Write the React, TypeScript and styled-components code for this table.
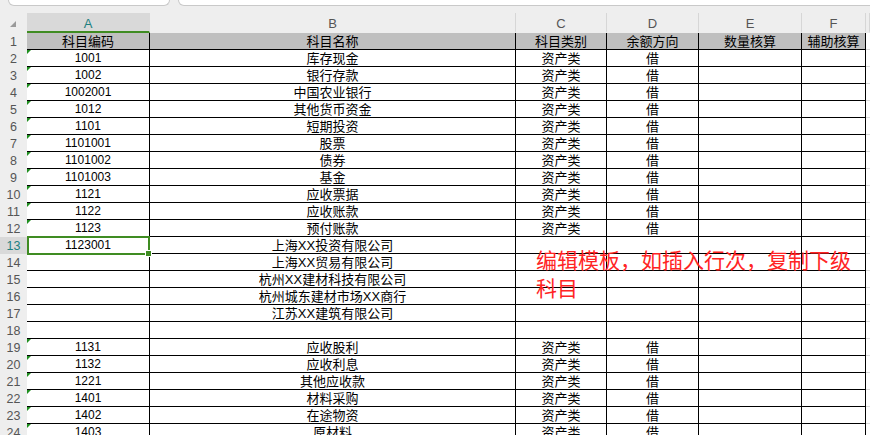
import React from "react";
import styled, { createGlobalStyle } from "styled-components";

const Global = createGlobalStyle`
  html, body { margin: 0; padding: 0; background: #eeeeee; overflow: hidden; }
  body { font-family: "Liberation Sans", "Noto Sans CJK SC", sans-serif; }
`;

const COLS = "27px 123px 366px 91px 92px 103px 64px 1fr";

const Page = styled.div`
  position: relative;
  width: 870px;
  height: 435px;
  overflow: hidden;
  background: #eeeeee;
`;

const TopBar = styled.div`
  height: 13px;
  display: flex;
  gap: 8px;
  padding-left: 8px;
  box-sizing: border-box;
`;

const Field = styled.div<{ $w?: string }>`
  width: ${(p) => p.$w || "auto"};
  flex: ${(p) => (p.$w ? "none" : "1")};
  height: 6px;
  background: #fff;
  border: 1px solid #c9c9c9;
  border-top: none;
  border-radius: 0 0 6px 6px;
  box-sizing: border-box;
  margin-right: ${(p) => (p.$w ? "0" : "-10px")};
`;

const Row = styled.div<{ $h?: number }>`
  display: grid;
  grid-template-columns: ${COLS};
  height: ${(p) => p.$h || 17}px;
`;

const Corner = styled.div`
  position: relative;
  background: #eeeeee;
  display: flex;
  align-items: flex-start;
  padding: 8px 0 0 10px;
  box-sizing: border-box;
`;

const ColHead = styled.div<{ $active?: boolean }>`
  background: ${(p) => (p.$active ? "#d9d9d9" : "#eeeeee")};
  color: ${(p) => (p.$active ? "#1c8080" : "#555")};
  border-right: 1px solid ${(p) => (p.$active ? "#d9d9d9" : "#d6d6d6")};
  border-bottom: 2px solid ${(p) => (p.$active ? "#3f8c22" : "transparent")};
  box-sizing: border-box;
  font-size: 13px;
  display: flex;
  align-items: center;
  justify-content: center;
  padding-top: 2px;
`;

const RowHead = styled.div<{ $active?: boolean }>`
  background: ${(p) => (p.$active ? "#d9d9d9" : "#eeeeee")};
  color: ${(p) => (p.$active ? "#1c8080" : "#555")};
  font-size: 12.5px;
  display: flex;
  align-items: center;
  justify-content: center;
`;

const Cell = styled.div<{ $head?: boolean; $cjk?: boolean }>`
  position: relative;
  background: ${(p) => (p.$head ? "#bfbfbf" : "#fff")};
  border-right: 1px solid #000;
  border-bottom: 1px solid #000;
  box-sizing: border-box;
  font-size: ${(p) => (p.$cjk ? "13px" : "12px")};
  color: #000;
  display: flex;
  align-items: center;
  justify-content: center;
  white-space: nowrap;
  overflow: visible;
  line-height: 1;
`;

const Blank = styled.div`
  background: #fff;
  border-bottom: 1px solid #dadada;
  box-sizing: border-box;
`;

const Flag = styled.span`
  position: absolute;
  left: 0;
  top: 0;
  width: 0;
  height: 0;
  border-top: 4px solid #1f8f1f;
  border-right: 4px solid transparent;
`;

const Selection = styled.span`
  position: absolute;
  z-index: 3;
  left: 0;
  top: -1px;
  right: -1px;
  bottom: -2px;
  border: 2px solid #3f8c22;
  pointer-events: none;
`;

const Handle = styled.span`
  position: absolute;
  right: -4px;
  bottom: -4px;
  width: 5px;
  height: 5px;
  background: #3f8c22;
  border: 1px solid #fff;
`;

const Note = styled.div`
  position: absolute;
  z-index: 4;
  left: 536px;
  top: 245px;
  width: 322px;
  font-family: "Noto Sans CJK SC", sans-serif;
  font-size: 21px;
  line-height: 28px;
  color: #ff2424;
`;

type R = [string, string, string, string];

const rows: R[] = [
  ["1001", "库存现金", "资产类", "借"],
  ["1002", "银行存款", "资产类", "借"],
  ["1002001", "中国农业银行", "资产类", "借"],
  ["1012", "其他货币资金", "资产类", "借"],
  ["1101", "短期投资", "资产类", "借"],
  ["1101001", "股票", "资产类", "借"],
  ["1101002", "债券", "资产类", "借"],
  ["1101003", "基金", "资产类", "借"],
  ["1121", "应收票据", "资产类", "借"],
  ["1122", "应收账款", "资产类", "借"],
  ["1123", "预付账款", "资产类", "借"],
  ["1123001", "上海XX投资有限公司", "", ""],
  ["", "上海XX贸易有限公司", "", ""],
  ["", "杭州XX建材科技有限公司", "", ""],
  ["", "杭州城东建材市场XX商行", "", ""],
  ["", "江苏XX建筑有限公司", "", ""],
  ["", "", "", ""],
  ["1131", "应收股利", "资产类", "借"],
  ["1132", "应收利息", "资产类", "借"],
  ["1221", "其他应收款", "资产类", "借"],
  ["1401", "材料采购", "资产类", "借"],
  ["1402", "在途物资", "资产类", "借"],
  ["1403", "原材料", "资产类", "借"],
];

const CornerMark = () => (
  <svg width="6" height="6" viewBox="0 0 6 6">
    <path d="M6 0 L6 6 L0 6 Z" fill="#9a9a9a" />
  </svg>
);

export default function App() {
  const letters = ["A", "B", "C", "D", "E", "F"];
  return (
    <Page>
      <Global />
      <TopBar>
        <Field $w="162px" />
        <Field />
      </TopBar>
      <Row $h={20}>
        <Corner>
          <CornerMark />
        </Corner>
        {letters.map((l) => (
          <ColHead key={l} $active={l === "A"}>
            {l}
          </ColHead>
        ))}
        <ColHead />
      </Row>
      <Row>
        <RowHead>1</RowHead>
        <Cell $head $cjk>科目编码</Cell>
        <Cell $head $cjk>科目名称</Cell>
        <Cell $head $cjk>科目类别</Cell>
        <Cell $head $cjk>余额方向</Cell>
        <Cell $head $cjk>数量核算</Cell>
        <Cell $head $cjk>辅助核算</Cell>
        <Blank />
      </Row>
      {rows.map((r, i) => {
        const n = i + 2;
        const active = n === 13;
        return (
          <Row key={n}>
            <RowHead $active={active}>{n}</RowHead>
            <Cell>
              {r[0] && !active && <Flag />}
              {r[0]}
              {active && (
                <Selection>
                  <Handle />
                </Selection>
              )}
            </Cell>
            <Cell $cjk>{r[1]}</Cell>
            <Cell $cjk>{r[2]}</Cell>
            <Cell $cjk>{r[3]}</Cell>
            <Cell />
            <Cell />
            <Blank />
          </Row>
        );
      })}
      <Note>编辑模板，如插入行次，复制下级科目</Note>
    </Page>
  );
}
